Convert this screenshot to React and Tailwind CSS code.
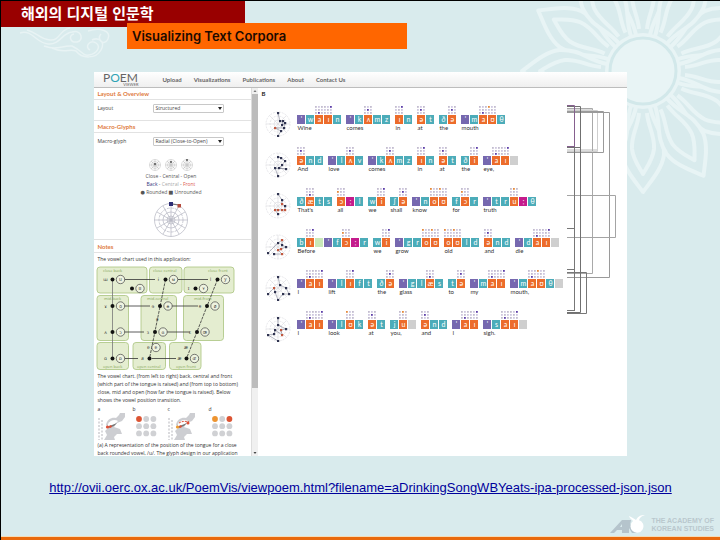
import React from 'react';

const NAV_LINKS = ['Upload', 'Visualizations', 'Publications', 'About', 'Contact Us'];

const URL_TEXT =
  'http://ovii.oerc.ox.ac.uk/PoemVis/viewpoem.html?filename=aDrinkingSongWBYeats-ipa-processed-json.json';

// Tile kinds: p = stress mark, t = consonant, o = vowel, m = length mark, g = punctuation, l = syllable break
const TILE_COLORS = {
  p: 'bg-[#7668af]',
  t: 'bg-[#4cacb9]',
  o: 'bg-[#ec6c2b]',
  m: 'bg-[#c41c8c]',
  g: 'bg-[#cfcfcf]',
  l: 'bg-[#c9e8b8]',
};

// Each word: label, kinds, symbols
const LINES = [
  {
    points: [[0, -11], [2, -3], [5, -3], [4, 1], [7, -1], [6, 4], [-3, 4, 1], [3, 7], [0, 12]],
    words: [['Wine', 'ptoot', "'waɪn"], ['comes', 'ptott', "'kʌmz"], ['in', 'ot', 'ɪn'], ['at', 'ot', 'ət'], ['the', 'to', 'ðə'], ['mouth', 'ptoot', "'maʊθ"]],
  },
  {
    points: [[0, -8], [3, -7], [7, -4], [4, 0], [1, 3], [8, 4], [-3, 3], [0, 11]],
    words: [['And', 'ott', 'ənd'], ['love', 'ptot', "'lʌv"], ['comes', 'ptott', "'kʌmz"], ['in', 'ot', 'ɪn'], ['at', 'ot', 'ət'], ['the', 'to', 'ði'], ['eye,', 'poog', "'aɪ "]],
  },
  {
    points: [[0, -12], [4, -6], [4, -2, 1], [7, 0], [7, 4, 1], [4, 4, 1], [0, 4, 1], [-3, 4, 1], [0, 8]],
    words: [["That's", 'tott', 'ðæts'], ['all', 'omt', 'ɔːl'], ['we', 'to', 'wi'], ['shall', 'to', 'ʃə'], ['know', 'ptoo', "'noʊ"], ['for', 'tot', 'fɔr'], ['truth', 'pttomt', "'truːθ"]],
  },
  {
    points: [[-10, 6], [0, -4], [4, -7, 1], [4, -2], [8, 0], [3, 2, 1], [0, 3, 1], [4, 7, 1], [-4, 7]],
    words: [['Before', 'tolptomt', "bɪ 'fɔːr"], ['we', 'to', 'wi'], ['grow', 'pttoo', "'groʊ"], ['old', 'oott', 'oʊld'], ['and', 'ott', 'ənd'], ['die', 'ptoog', "'daɪ "]],
  },
  {
    points: [[0, -11], [2, -3], [8, 0], [11, 6], [5, 6], [0, 12], [-3, 4], [-4, 0, 1], [-10, 6]],
    words: [['I', 'poo', "'aɪ"], ['lift', 'ptott', "'lɪft"], ['the', 'to', 'ðə'], ['glass', 'pttot', "'glæs"], ['to', 'to', 'tə'], ['my', 'ptoo', "'maɪ"], ['mouth,', 'ptootg', "'maʊθ "]],
  },
  {
    points: [[0, -11], [0, -4], [8, 0], [3, 1, 1], [4, 6, 1], [-3, 1], [-4, 5], [-10, 6], [0, 12]],
    words: [['I', 'poo', "'aɪ"], ['look', 'ptot', "'lʊk"], ['at', 'ot', 'ət'], ['you,', 'tog', 'ju '], ['and', 'ott', 'ənd'], ['I', 'poo', "'aɪ"], ['sigh.', 'ptoog', "'saɪ "]],
  },
];

const HIGHLIGHTS = { a: 7, ɪ: 2, ʌ: 4, ə: 4, ʊ: 0, i: 2, æ: 7, ɔ: 3, u: 1, o: 0 };

/** Three by three dot matrix shown above every vowel */
const PositionGrid = ({ symbol }) => {
  const active = HIGHLIGHTS[symbol];
  const warm = 'ʊuoɔ'.includes(symbol);
  return (
    <svg viewBox="0 0 8 8" className="w-2 h-2 block" aria-hidden="true">
      {Array.from({ length: 9 }, (_, i) => (
        <rect
          key={i}
          x={(i % 3) * 3}
          y={Math.floor(i / 3) * 3}
          width="1.8"
          height="1.8"
          fill={i === active ? (warm ? '#e58a3c' : '#5d3fa8') : i % 2 ? '#cfc8e0' : '#c3bccf'}
        />
      ))}
    </svg>
  );
};

const Word = ({ label, kinds, symbols }) => (
  <div>
    <div className="flex gap-px">
      {[...symbols].map((symbol, i) => (
        <div key={i} className="w-2">
          <div className="h-[9px]">{kinds[i] === 'o' && <PositionGrid symbol={symbol} />}</div>
          <div className={`h-[9px] text-center text-[7px] leading-[8px] text-white ${TILE_COLORS[kinds[i]]}`}>
            {symbol}
          </div>
        </div>
      ))}
    </div>
    <div className="h-2 w-0 whitespace-nowrap text-[6px] leading-[8px] text-[#333]">{label}</div>
  </div>
);

const RadialGlyph = ({ points }) => (
  <svg viewBox="-13 -13 26 26" className="w-[26px] h-[26px] shrink-0 mt-[5px]" aria-hidden="true">
    <g fill="none" stroke="#d9d9dd" strokeWidth=".6">
      <circle r="12" strokeDasharray="2 1" />
      <circle r="8" strokeDasharray="2 1" />
      <circle r="4" />
      <path d="M-12 0H12M0-12V12M-8.5-8.5 8.5 8.5M-8.5 8.5 8.5-8.5" />
    </g>
    <polyline points={points.map(([x, y]) => `${x},${y}`).join(' ')} fill="none" stroke="#6c7084" strokeWidth=".5" />
    {points.map(([x, y, red], i) => (
      <rect key={i} x={x - 1} y={y - 1} width="2.2" height="2.2" fill={red ? '#c1583f' : '#2f3350'} />
    ))}
  </svg>
);

/** Rhyme and alliteration links on the right of the poem */
const SoundLinks = () => (
  <svg viewBox="567 100 50 216" className="w-[50px] h-[216px] shrink-0 ml-auto mr-2.5 mt-3" fill="none" aria-hidden="true">
    <path d="M567 110H592M567 150.500H597" stroke="#dcdcdc" strokeWidth="3" />
    <path d="M567 108.500H592.500V273.500H567" stroke="#a9a9a9" />
    <path d="M567 110.500H597.500V151.500H567" stroke="#cfcfcf" />
    <path d="M567 111.500H603.500V152.500H567M567 112.500H609.500V277.500H567" stroke="#9a9a9a" />
    <path d="M567 195.500H615.500V237.500H567" stroke="#a4a4a4" />
    <path d="M567 272.500H586.500V313.500H567" stroke="#777" />
    <path d="M574.500 146V311M567 228.500H574.500M567 269.500H574.500M567 310.500H574.500" stroke="#777" />
    <path d="M567 106.500H580.500V147.500H567M580.500 147V312.500H567" stroke="#707070" />
    <path d="M567 105.500H574.500V146.500H567" stroke="#86608f" />
  </svg>
);

const BackgroundPattern = () => (
  <svg className="absolute top-0 right-0 w-[720px] h-[540px]" viewBox="0 0 720 540" fill="none" aria-hidden="true">
    <g transform="translate(643 70)" stroke="#e8f4f5" strokeWidth="4" strokeLinejoin="round">
      {[30, 90, 150, 210, 270, 330, 0, 60, 120, 180, 240, 300].map((angle) => (
        <g key={angle} transform={`rotate(${angle})`}>
          <path d="M36-7C56-11 62-22 84-21 98-19 110-8 121 0 110 8 98 19 84 21 62 22 56 11 36 7" fill="#d9ebed" />
          <path d="M42-4C56-5 64-12 78-11 88-10 96-4 103 0 96 4 88 10 78 11 64 12 56 5 42 4" />
        </g>
      ))}
      <circle r="38" fill="#e8f4f5" stroke="none" />
      <circle r="33" stroke="#d2e8ea" strokeWidth="3" />
    </g>
    <g stroke="#e8f3f4" strokeWidth="1.500">
      <path d="M20 32C32 28 36 42 48 43S62 32 72 31C82 28 84 40 77 41S68 34 74 33" />
      <path d="M27 29C38 32 40 38 50 39S60 28 70 27M44 45C58 50 62 44 72 45C84 51 82 55 89 54S102 46 96 42S84 46 90 49" />
      <path d="M52 47C64 53 70 47 76 50C82 58 96 58 101 49C106 40 98 36 92 39M88 30C100 26 112 30 108 38S96 38 101 33" />
    </g>
  </svg>
);

const SectionTitle = ({ children }) => (
  <h2 className="h-3 px-[3px] border-b border-[#e2e2e2] text-[6px] leading-[12px] font-[Lato,sans-serif] font-bold text-[#e07a3c]">{children}</h2>
);

const SelectRow = ({ id, label, options }) => (
  <div className="flex items-start h-5 pt-1 px-[3px]">
    <label htmlFor={id} className="w-14 leading-[9px] text-[#444]">{label}</label>
    <div className="relative w-[71px]">
      <select id={id} className="block w-full h-[9px] appearance-none rounded-[1px] border border-[#c8c8c8] bg-white pl-px text-[5px] leading-[7px] text-[#444]">
        {options.map((option) => (
          <option key={option}>{option}</option>
        ))}
      </select>
      <svg viewBox="0 0 4 3" className="absolute right-0.5 top-[3px] w-1 h-[3px] pointer-events-none" aria-hidden="true">
        <path d="M0 0H4L2 3Z" fill="#222" />
      </svg>
    </div>
  </div>
);

const MiniRadial = ({ level }) => (
  <svg viewBox="-6 -6 12 12" className="w-3 h-3" fill="none" stroke="#bbb" strokeWidth=".5" aria-hidden="true">
    <circle r="5.500" />
    <circle r="3.500" />
    <circle r="1.500" />
    <path d="M-5.500 0H5.500M0-5.500V5.500M-4-4 4 4M-4 4 4-4" />
    <circle cy={-level} r=".9" fill="#444" stroke="none" />
  </svg>
);

const MacroRadial = () => (
  <svg viewBox="-18 -18 36 37" className="w-9 h-[37px]" fill="none" aria-hidden="true">
    <g stroke="#b4b6c2" strokeWidth=".7">
      <circle r="16.500" />
      <circle r="12" strokeDasharray="3 1" />
      <circle r="8" />
      <circle r="4" />
      <circle r="2" />
      <path d="M-16.500 0H16.500M0-16.500V16.500M-14-8 14 8M-14 8 14-8M-8-14 8 14M-8 14 8-14" />
    </g>
    <path d="M0-16 8-15" stroke="#555" strokeWidth=".8" />
    <rect x="-2" y="-18" width="4" height="4" fill="#2d2d75" />
    <rect x="6.500" y="-16" width="3.500" height="3.500" fill="#b44a3c" />
  </svg>
);

const VOWEL_BOXES = [
  [97, 267, 50, 26], [149.5, 267, 32.5, 26], [184, 267, 50, 26],
  [97, 295.5, 31.5, 45], [141, 295.5, 35.5, 45], [183.5, 295.5, 40, 45],
  [97, 342.5, 31.5, 27], [133, 342.5, 32.5, 27], [169.5, 342.5, 31.5, 27],
];

// x, y of the dot, then the symbols left and right of it
const VOWELS = [
  [112.5, 279.5, 'ɯ', 'u'], [165.5, 279.5, 'ɨ', 'ʉ'], [217.5, 279.5, 'i', 'y'],
  [132, 288.5, '', 'ʊ'], [195.5, 288.5, 'ɪ', 'ʏ'],
  [112.5, 306, 'ɤ', 'o'], [160, 306, 'ɘ', 'ɵ'], [207, 306, 'e', 'ø'],
  [112.5, 332, 'ʌ', 'ɔ'], [155, 332, 'ɜ', 'ɞ'], [197, 332, 'ɛ', 'œ'],
  [112.5, 358.5, 'ɑ', 'ɒ'], [149.5, 358.5, 'a', ''], [186.5, 358.5, 'æ', 'ɶ'],
];

const CHART_LABELS = [
  [103, 271.5, 'close back'], [153, 271.5, 'close central'], [208, 271.5, 'close front'],
  [104, 300, 'mid-back'], [147, 300, 'mid-central'], [194, 300, 'mid-front'],
  [103, 368, 'open back'], [137, 368, 'open central'], [176, 368, 'open front'],
];

const VowelChart = () => (
  <svg viewBox="96 266 145 105" className="block w-[145px] h-[105px]" aria-hidden="true">
    {VOWEL_BOXES.map(([x, y, w, h]) => (
      <rect key={`${x}-${y}`} x={x} y={y} width={w} height={h} rx="3" fill="#e4edd0" stroke="#a9c47f" strokeWidth=".8" />
    ))}
    <g stroke="#333" strokeWidth=".8" fill="none">
      <path d="M124 279.500H155M178 279.500H208M124 306H150M172 306H198M124 332H144M167 332H190M124 358.500H138M152 358.500H176" />
      <path d="M112.500 279.500V358.500" stroke="#777" />
      <path d="M165.500 279.500 149.500 358.500M217.500 279.500 186.500 358.500" strokeDasharray="3 1" />
    </g>
    {VOWELS.map(([x, y, left, right]) => (
      <g key={`${x}-${y}`} fontSize="4.500" textAnchor="middle" fill="#333">
        <circle cx={x} cy={y} r="2" fill="#111" />
        {right && <circle cx={x + 8} cy={y} r="4.200" fill="#eef3e0" stroke="#444" strokeWidth=".7" />}
        <text x={x + 8} y={y + 1.5}>{right}</text>
        <text x={x - 7} y={y + 1.5}>{left}</text>
      </g>
    ))}
    <circle cx="156" cy="347.500" r="4.200" fill="#eef3e0" stroke="#444" strokeWidth=".7" />
    <g fontSize="4.500" fill="#333">
      <text x="154.500" y="349">ɐ</text>
      <text x="147" y="349">ɐ</text>
      <text x="156" y="321">ə</text>
      <text x="184" y="349">æ</text>
    </g>
    <g fontSize="4" fill="#86a65a">
      {CHART_LABELS.map(([x, y, text]) => (
        <text key={text} x={x} y={y}>{text}</text>
      ))}
    </g>
  </svg>
);

const TongueFigure = ({ second }) => (
  <svg viewBox="0 0 30 28" className="w-[30px] h-7" aria-hidden="true">
    <path d="M9 12C10 6 15 4 19 5L22 2 23 0H28V4L25 8 20 10 17 14 23 16 25 21 20 21 17 24 18 27H7L10 22 8 18 11 15Z" fill="#cdced2" />
    <path d="M11 11C13 7 18 6 21 8L17 12 11 13Z" fill="#fff" />
    <path d="M2 5V27M5 7V27" stroke="#dadadd" strokeWidth="2" strokeDasharray="2 1.500" />
    <path d="M10 14 20 10 17 13 12 15Z" fill="#777" />
    <circle cx="10.500" cy="14" r="1.600" fill={second ? '#ef9a2d' : '#df4f35'} />
    <circle cx="13.500" cy="13.500" r="1.200" fill="#df4f35" />
    {second && <path d="M12 10C15 8 19 8 22 9" stroke="#df4f35" strokeDasharray="2 1" fill="none" />}
    {second && <circle cx="21" cy="10" r="1.500" fill="#df4f35" />}
  </svg>
);

const DotMatrix = ({ colors }) => (
  <svg viewBox="0 0 21 21" className="w-[21px] h-[21px] ml-1 mt-[3px]" aria-hidden="true">
    {Array.from({ length: 9 }, (_, i) => (
      <circle key={i} cx={3 + (i % 3) * 7.2} cy={3 + Math.floor(i / 3) * 7.2} r="2.900" fill={colors[i] || '#d0d1d4'} />
    ))}
  </svg>
);

const Figure = ({ label, children }) => (
  <figure className="w-[35px]">
    <figcaption className="h-[7px] leading-[6px]">{label}</figcaption>
    {children}
  </figure>
);

const Sidebar = () => (
  <aside className="flex w-[164px] shrink-0 min-h-0 text-[5px] font-['Open_Sans','DejaVu_Sans',sans-serif]">
    <div className="flex-1 min-w-0 overflow-hidden border-r border-[#ddd] whitespace-nowrap">
      <SectionTitle>Layout &amp; Overview</SectionTitle>
      <SelectRow id="layout" label="Layout" options={['Structured']} />
      <div className="border-t border-[#e2e2e2]">
        <SectionTitle>Macro-Glyphs</SectionTitle>
      </div>
      <SelectRow id="macro-glyph" label="Macro-glyph" options={['Radial (Close-to-Open)']} />

      <div className="flex flex-col items-center h-[86px] pt-1.5 pr-1 leading-[8px] text-[#555]">
        <div className="flex gap-1 mb-px">
          <MiniRadial level={1} />
          <MiniRadial level={3} />
          <MiniRadial level={5} />
        </div>
        <p>Close - Central - Open</p>
        <p>
          <span className="text-[#34347c]">Back</span> - <span className="text-[#aaa]">Central</span> -{' '}
          <span className="text-[#dd5a52]">Front</span>
        </p>
        <p>● Rounded ■ Unrounded</p>
        <div className="mt-1.5">
          <MacroRadial />
        </div>
      </div>

      <div className="border-t border-[#e2e2e2] pt-px">
        <SectionTitle>Notes</SectionTitle>
      </div>
      <div className="px-[3px] text-[#333] leading-[8px]">
        <p className="pt-0.5 pb-[3px]">The vowel chart used in this application:</p>
        <div className="-ml-px">
          <VowelChart />
        </div>
        <p className="pt-px">
          The vowel chart. (from left to right) back, central and front
          <br />
          (which part of the tongue is raised) and (from top to bottom)
          <br />
          close, mid and open (how far the tongue is raised). Below
          <br />
          shows the vowel position transition.
        </p>
        <div className="flex h-[37px] pt-0.5">
          <Figure label="a"><TongueFigure /></Figure>
          <Figure label="b"><DotMatrix colors={{ 0: '#dc5433' }} /></Figure>
          <Figure label="c"><TongueFigure second /></Figure>
          <div className="w-1.5" />
          <Figure label="d"><DotMatrix colors={{ 0: '#ed9430', 2: '#dc5433' }} /></Figure>
        </div>
        <p>
          (a) A representation of the position of the tongue for a close
          <br />
          back rounded vowel, /u/. The glyph design in our application
        </p>
      </div>
    </div>

    {/* Scrollbar */}
    <div className="flex flex-col items-center w-1.5 bg-[#f0f0f0]">
      <svg viewBox="0 0 6 6" className="w-1.5 h-1.5" aria-hidden="true"><path d="M1.500 4H4.500L3 2Z" fill="#777" /></svg>
      <div className="w-full h-4/5 bg-[#bcbcbc]" />
      <svg viewBox="0 0 6 6" className="w-1.5 h-1.5 mt-auto" aria-hidden="true"><path d="M1.500 2H4.500L3 4Z" fill="#444" /></svg>
    </div>
  </aside>
);

const PoemLogo = () => (
  <div className="w-9 text-[#666]">
    <div className="text-[12px] leading-[11px] text-center">
      P<span className="text-[#2fa3b5]">O</span>EM
    </div>
    <div className="text-right text-[4px] leading-[4px]">VIEWER</div>
  </div>
);

const PoemViewer = () => (
  <main className="flex flex-col flex-1 min-h-0 w-[74%] mx-auto mt-[23px] bg-white font-[Lato,'Noto_Sans','DejaVu_Sans',sans-serif]">
    <nav className="flex items-center h-4 shrink-0 pl-2 border-b border-[#bdbdbd] bg-linear-to-b from-white to-[#efefef]">
      <PoemLogo />
      <div className="flex gap-3 ml-6 text-[6px] font-bold text-[#666]">
        {NAV_LINKS.map((link) => (
          <a key={link} href="#">{link}</a>
        ))}
      </div>
    </nav>
    <div className="flex flex-1 min-h-0">
      <Sidebar />
      <section className="flex flex-1 min-w-0">
        <div className="pl-[7px]">
          <div className="h-[18px] pt-0.5 -ml-1 text-[6px] leading-[8px] font-bold text-[#222]">B</div>
          {LINES.map((line, i) => (
            <div key={i} className="flex items-start h-[41px]">
              <RadialGlyph points={line.points} />
              <div className="flex gap-[5px] ml-1.5">
                {line.words.map(([label, kinds, symbols], j) => (
                  <Word key={j} label={label} kinds={kinds} symbols={symbols} />
                ))}
              </div>
            </div>
          ))}
        </div>
        <SoundLinks />
      </section>
    </div>
  </main>
);

const AcademyLogo = () => (
  <div className="flex items-center gap-1.5 text-[#b9c8cd]">
    <svg viewBox="0 0 36 22" className="w-9 h-[22px]" aria-hidden="true">
      <path d="M1 19 13 6H18V19H13V16H8L5 19ZM11 13H13V10ZM18 6H22L21 11 27 6H31L24 12 28 19H23L20 14V19H17Z" fill="#b5c4cc" />
      <path d="M27 6C29 2 32 1 36 1 32 2 31 4 30 6A6.500 6.500 0 1 1 24 7C22 5 20 3 20 2 23 3 25 5 27 6Z" fill="#fff" />
    </svg>
    <p className="font-bold text-[7px] leading-[8px]">
      THE ACADEMY OF
      <br />
      KOREAN STUDIES
    </p>
  </div>
);

export default function App() {
  return (
    <div className="relative flex flex-col h-screen min-h-[540px] overflow-hidden border-t border-l border-black bg-[#d9ebed] font-['Liberation_Sans','Noto_Sans_CJK_KR',sans-serif]">
      <BackgroundPattern />
      <div className="relative flex flex-col flex-1 min-h-0">
        <header>
          <div className="w-[34%] h-[26px] pl-5 bg-[#990000]">
            <h1 className="text-[15px] leading-[26px] font-bold text-white">해외의 디지털 인문학</h1>
          </div>
          <div className="relative w-[39%] h-[26px] ml-[126px] -mt-1 pl-[5px] bg-[#ff6600]">
            <p className="font-[Inter,sans-serif] text-[13px] leading-[26px] font-semibold text-[#1c0a00]">Visualizing Text Corpora</p>
          </div>
        </header>

        <PoemViewer />

        <p className="mt-[23px] text-center text-[13px] leading-[18px] whitespace-nowrap">
          <a href={URL_TEXT} className="text-[#00009c] underline">{URL_TEXT}</a>
        </p>
        <footer className="mt-[17px]">
          <div className="flex justify-end pr-1.5">
            <AcademyLogo />
          </div>
          <div className="h-1 border-t border-[#f3dcb8] bg-[#e9690c]" />
        </footer>
      </div>
    </div>
  );
}
